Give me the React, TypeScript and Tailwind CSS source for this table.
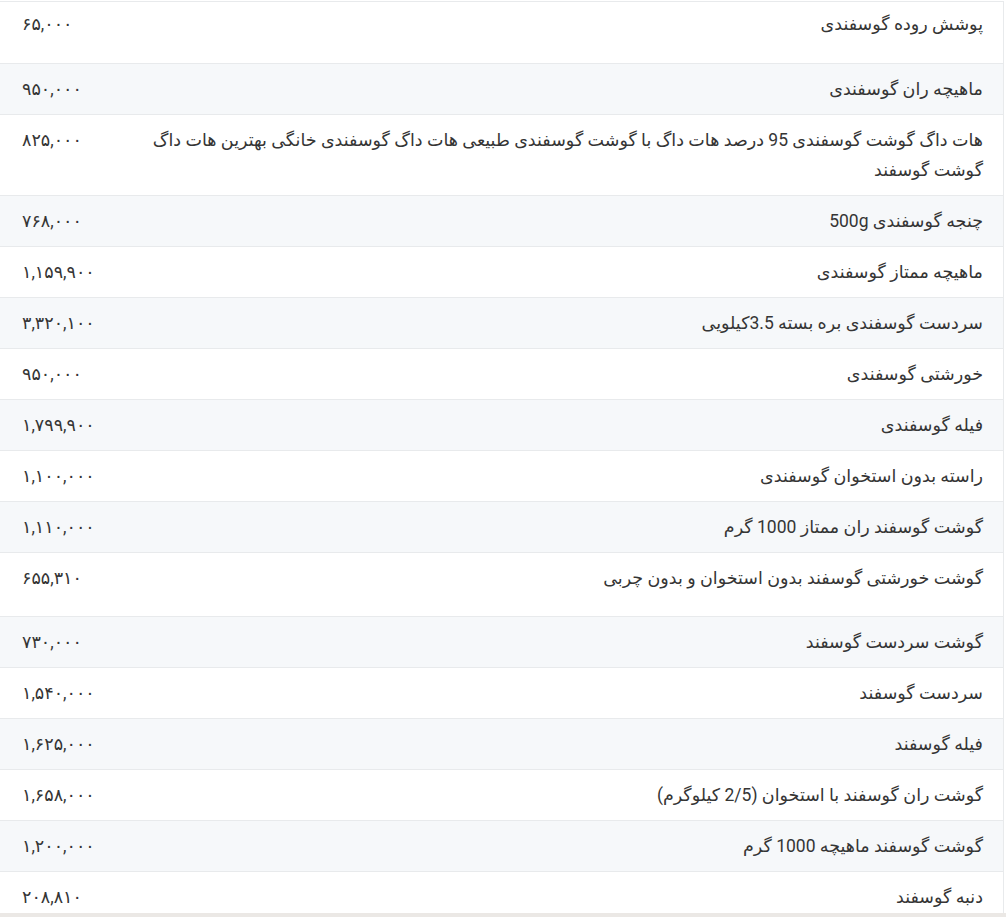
import React from 'react';

type Row = { name: string; price: string; extra?: string };

const rows: Row[] = [
  { name: 'پوشش روده گوسفندی', price: '۶۵,۰۰۰', extra: 'pt-[7px] pb-[24px]' },
  { name: 'ماهیچه ران گوسفندی', price: '۹۵۰,۰۰۰' },
  {
    name: 'هات داگ گوشت گوسفندی 95 درصد هات داگ با گوشت گوسفندی طبیعی هات داگ گوسفندی خانگی بهترین هات داگ گوشت گوسفند',
    price: '۸۲۵,۰۰۰',
  },
  { name: 'چنجه گوسفندی 500g', price: '۷۶۸,۰۰۰' },
  { name: 'ماهیچه ممتاز گوسفندی', price: '۱,۱۵۹,۹۰۰' },
  { name: 'سردست گوسفندی بره بسته 3.5کیلویی', price: '۳,۳۲۰,۱۰۰' },
  { name: 'خورشتی گوسفندی', price: '۹۵۰,۰۰۰' },
  { name: 'فیله گوسفندی', price: '۱,۷۹۹,۹۰۰' },
  { name: 'راسته بدون استخوان گوسفندی', price: '۱,۱۰۰,۰۰۰' },
  { name: 'گوشت گوسفند ران ممتاز 1000 گرم', price: '۱,۱۱۰,۰۰۰' },
  { name: 'گوشت خورشتی گوسفند بدون استخوان و بدون چربی', price: '۶۵۵,۳۱۰', extra: 'pt-[10px] pb-[23px]' },
  { name: 'گوشت سردست گوسفند', price: '۷۳۰,۰۰۰' },
  { name: 'سردست گوسفند', price: '۱,۵۴۰,۰۰۰' },
  { name: 'فیله گوسفند', price: '۱,۶۲۵,۰۰۰' },
  { name: 'گوشت ران گوسفند با استخوان (2/5 کیلوگرم)', price: '۱,۶۵۸,۰۰۰' },
  { name: 'گوشت گوسفند ماهیچه 1000 گرم', price: '۱,۲۰۰,۰۰۰' },
  { name: 'دنبه گوسفند', price: '۲۰۸,۸۱۰' },
];

export default function App() {
  return (
    <div
      className="w-[1006px] h-[917px] flex flex-col bg-[#ebe8e5] overflow-hidden text-[#353535]"
      style={{ fontFamily: 'Roboto, "DejaVu Sans", sans-serif' }}
    >
      {/* Price table */}
      <div className="h-[913px] shrink-0 bg-white pt-px overflow-hidden">
        <div dir="rtl" className="w-[1004px] border-t border-r border-[#e8eaec]">
          {rows.map((row, i) => (
            <div
              key={i}
              className={`grid grid-cols-[1fr_112px] border-b border-[#e8eaec] ${
                i % 2 === 1 ? 'bg-[#f6f8fa]' : 'bg-white'
              }`}
            >
              <div className={`pr-[20px] pl-[4px] text-[17.5px] leading-[30px] text-right ${row.extra ?? 'py-[10px]'}`}>
                {row.name}
              </div>
              <div className={`pl-[22px] text-[17.5px] leading-[30px] text-left ${row.extra ?? 'py-[10px]'}`}>
                {row.price}
              </div>
            </div>
          ))}
        </div>
      </div>
    </div>
  );
}
